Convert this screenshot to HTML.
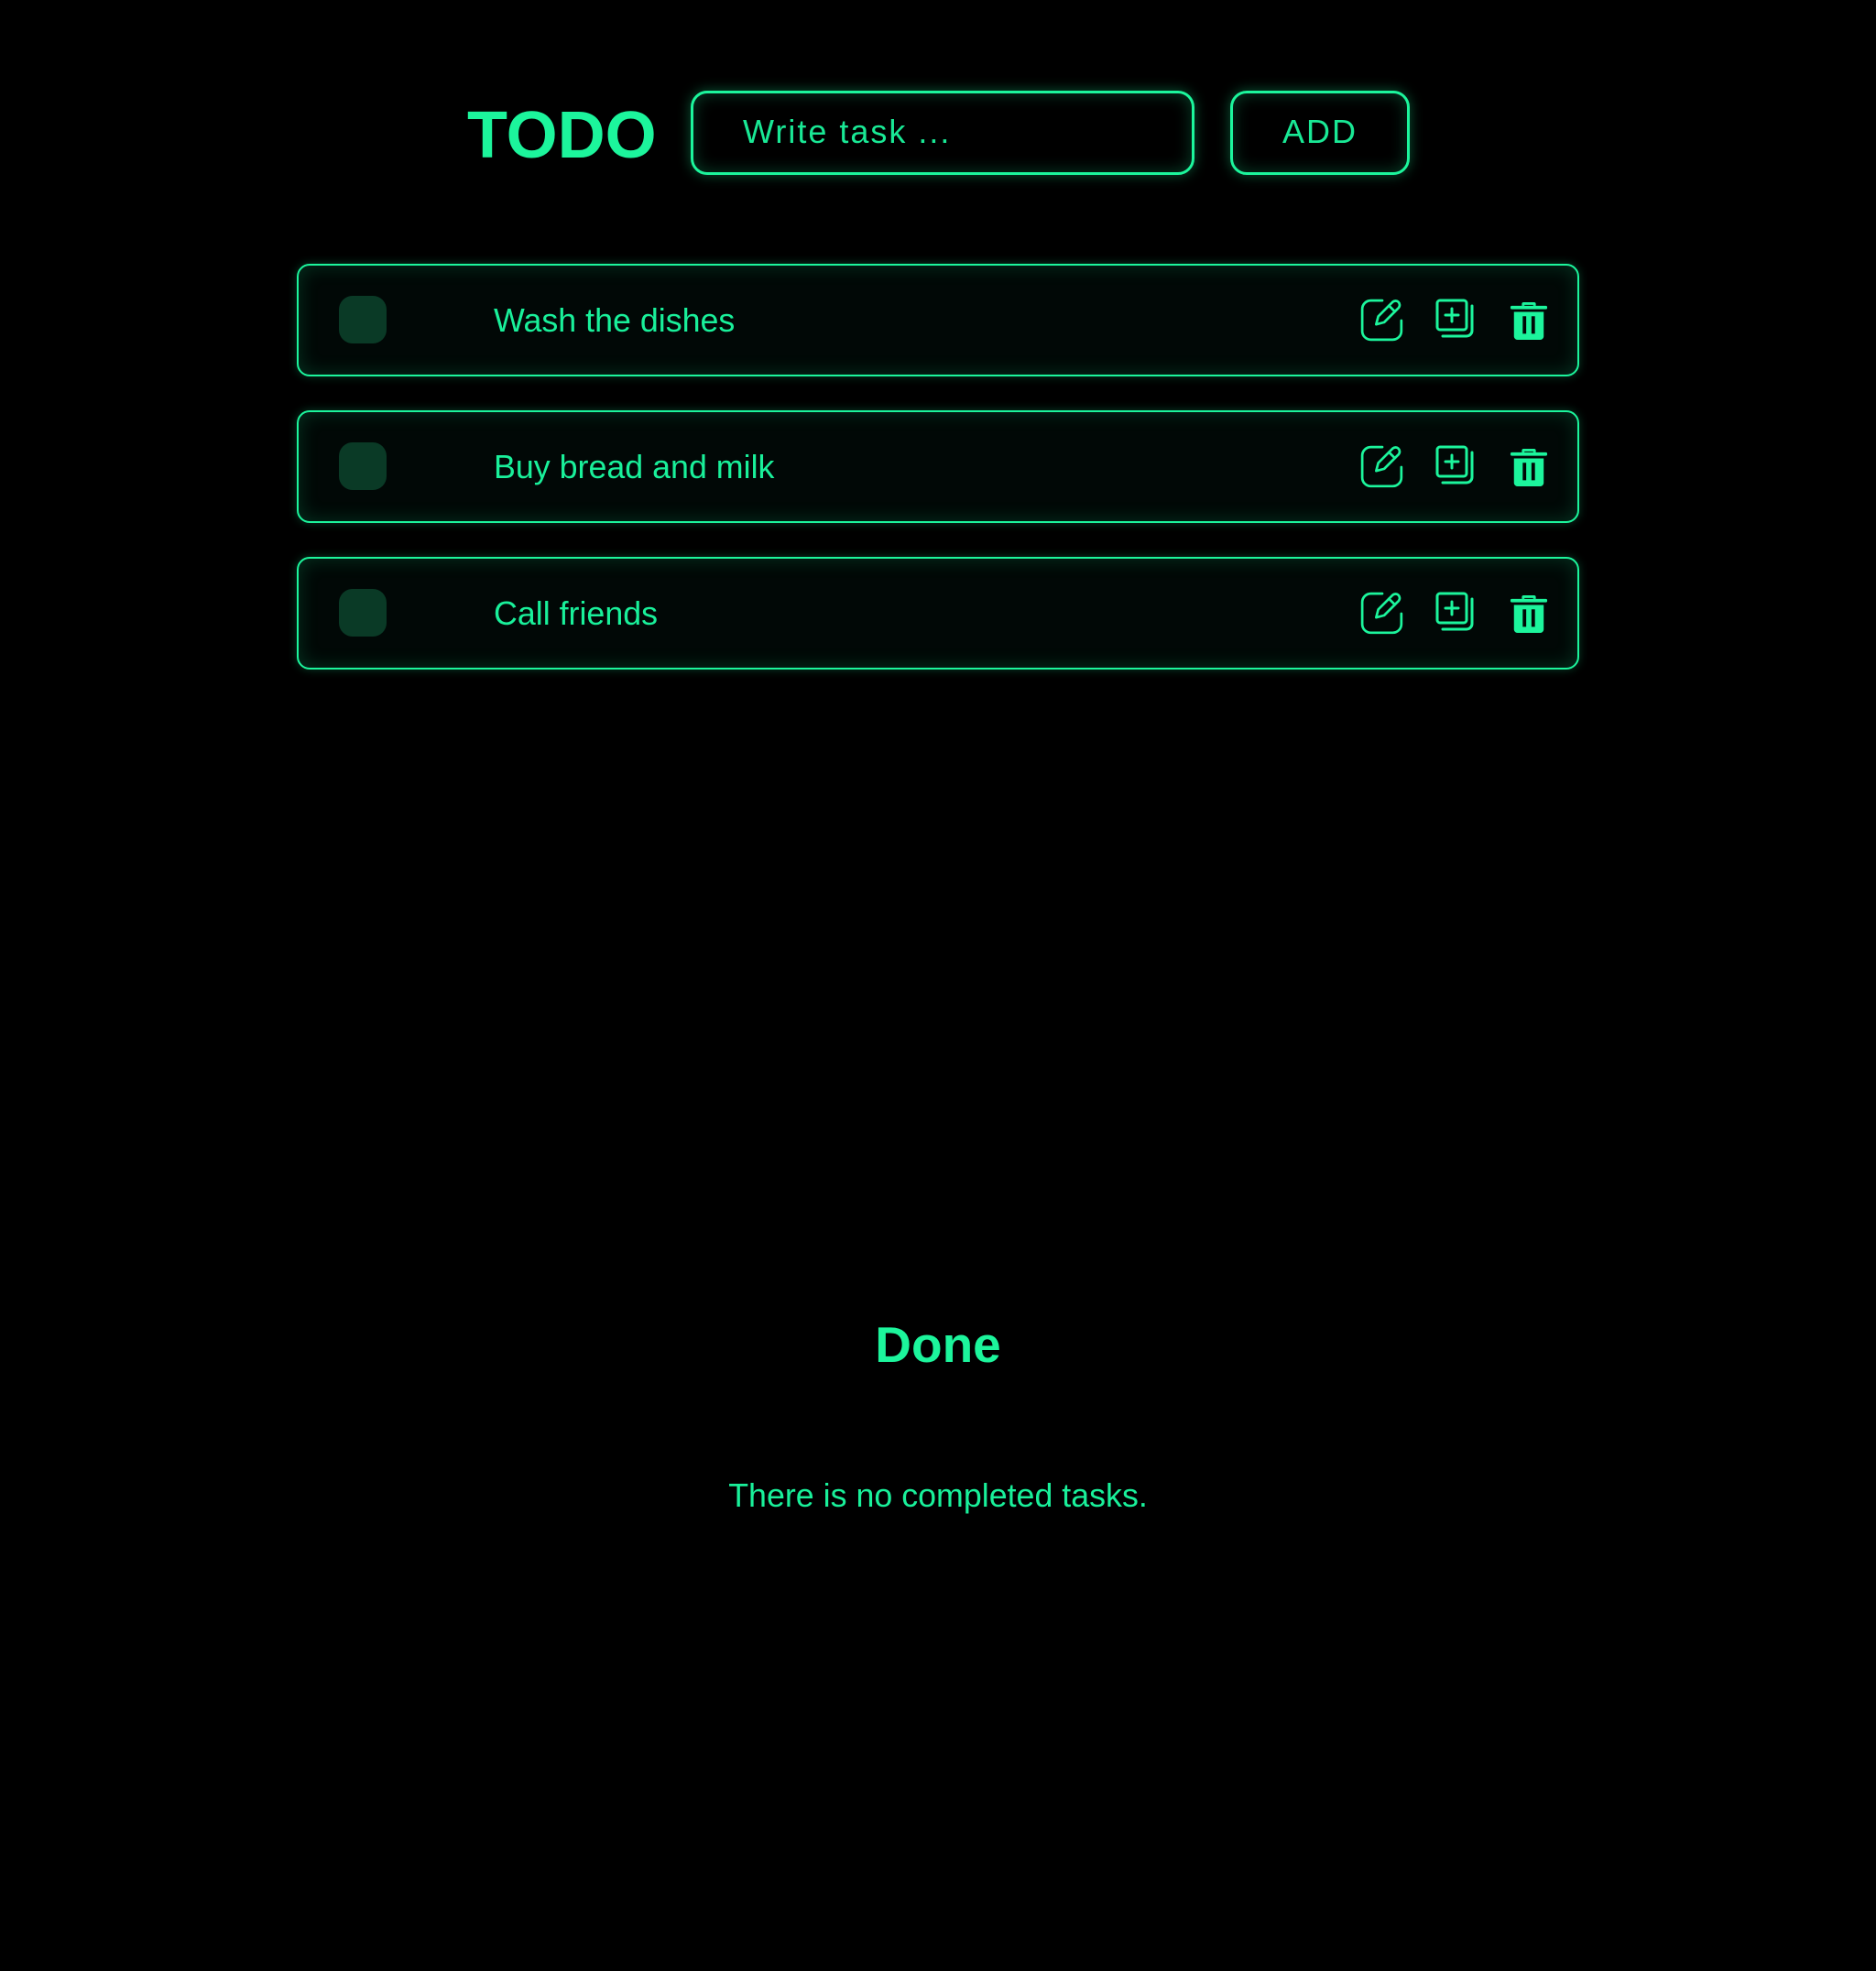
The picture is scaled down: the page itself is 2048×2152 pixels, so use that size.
<!DOCTYPE html>
<html><head><meta charset="utf-8">
<style>
html,body{margin:0;padding:0;background:#000;}
body{width:2048px;height:2152px;position:relative;font-family:"Liberation Sans",sans-serif;color:#19f09a;overflow:hidden;}
.todo{position:absolute;left:510px;top:100px;font-size:72px;font-weight:bold;color:#1cf59c;line-height:96px;}
.input{position:absolute;left:754px;top:99px;width:544px;height:86px;border:3px solid #1cf59c;border-radius:18px;box-shadow:0 0 14px rgba(28,245,156,0.35), inset 0 0 18px rgba(28,245,156,0.25);background:#000;}
.input span{position:absolute;left:54px;top:21px;font-size:36px;letter-spacing:2px;color:#19e895;}
.add{position:absolute;left:1343px;top:99px;width:190px;height:86px;border:3px solid #1cf59c;border-radius:18px;box-shadow:0 0 14px rgba(28,245,156,0.35), inset 0 0 18px rgba(28,245,156,0.25);text-align:center;line-height:84px;font-size:36px;letter-spacing:2px;color:#19e895;}
.card{position:absolute;left:324px;width:1396px;height:119px;border:2px solid #1cf59c;border-radius:14px;box-shadow:0 0 10px rgba(28,245,156,0.25), inset 0 0 22px rgba(28,245,156,0.18);background:#010806;}
.cb{position:absolute;left:44px;top:33px;width:52px;height:52px;border-radius:15px;background:#0a3a26;}
.txt{position:absolute;left:213px;top:39px;font-size:35.8px;line-height:42px;color:#19f09a;}
.ic{position:absolute;top:35px;}
.done{position:absolute;left:0;width:2048px;top:1436px;text-align:center;font-size:55px;font-weight:bold;color:#1cf59c;}
.none{position:absolute;left:0;width:2048px;top:1613px;text-align:center;font-size:35.8px;color:#19f09a;}
</style></head><body>
<div class="todo">TODO</div>
<div class="input"><span>Write task ...</span></div>
<div class="add">ADD</div>

<div class="card" style="top:288px"><div class="cb"></div><div class="txt">Wash the dishes</div>
<svg class="ic" style="left:1158px" width="50" height="50" viewBox="0 0 24 24" fill="none" stroke="#1cf59c" stroke-width="1.3" stroke-linecap="round" stroke-linejoin="round"><path d="M12 1.5H6a4.5 4.5 0 0 0-4.5 4.5v11.5A4.5 4.5 0 0 0 6 22h11.5a4.5 4.5 0 0 0 4.5-4.5V12"/><path d="M17.5 2.2a2.2 2.2 0 0 1 3.1 3.1L13 12.9l-4.2 1.1 1.1-4.2z"/><path d="M15.5 4.2l3.1 3.1"/></svg>
<svg class="ic" style="left:1240px" width="48" height="48" viewBox="0 0 24 24" fill="none" stroke="#1cf59c" stroke-width="1.5" stroke-linecap="round" stroke-linejoin="round"><rect x="1.5" y="1.5" width="16" height="16" rx="1.5"/><path d="M20.5 4.5v13.5a3 3 0 0 1-3 3H4.5"/><path d="M9.5 6v7M6 9.5h7"/></svg>
<svg class="ic" style="left:1322px;top:38px" width="42" height="46" viewBox="0 0 22 24" fill="#1cf59c"><path d="M7 3V2a1 1 0 0 1 1-1h6a1 1 0 0 1 1 1v1h-1.5v-.5h-5V3z"/><rect x="0.5" y="3" width="21" height="2" rx="0.8"/><path d="M2.5 6.5h17v14a2 2 0 0 1-2 2h-13a2 2 0 0 1-2-2z"/><rect x="7.5" y="9" width="2" height="10" fill="#010806"/><rect x="12.5" y="9" width="2" height="10" fill="#010806"/></svg>
</div>

<div class="card" style="top:448px"><div class="cb"></div><div class="txt">Buy bread and milk</div>
<svg class="ic" style="left:1158px" width="50" height="50" viewBox="0 0 24 24" fill="none" stroke="#1cf59c" stroke-width="1.3" stroke-linecap="round" stroke-linejoin="round"><path d="M12 1.5H6a4.5 4.5 0 0 0-4.5 4.5v11.5A4.5 4.5 0 0 0 6 22h11.5a4.5 4.5 0 0 0 4.5-4.5V12"/><path d="M17.5 2.2a2.2 2.2 0 0 1 3.1 3.1L13 12.9l-4.2 1.1 1.1-4.2z"/><path d="M15.5 4.2l3.1 3.1"/></svg>
<svg class="ic" style="left:1240px" width="48" height="48" viewBox="0 0 24 24" fill="none" stroke="#1cf59c" stroke-width="1.5" stroke-linecap="round" stroke-linejoin="round"><rect x="1.5" y="1.5" width="16" height="16" rx="1.5"/><path d="M20.5 4.5v13.5a3 3 0 0 1-3 3H4.5"/><path d="M9.5 6v7M6 9.5h7"/></svg>
<svg class="ic" style="left:1322px;top:38px" width="42" height="46" viewBox="0 0 22 24" fill="#1cf59c"><path d="M7 3V2a1 1 0 0 1 1-1h6a1 1 0 0 1 1 1v1h-1.5v-.5h-5V3z"/><rect x="0.5" y="3" width="21" height="2" rx="0.8"/><path d="M2.5 6.5h17v14a2 2 0 0 1-2 2h-13a2 2 0 0 1-2-2z"/><rect x="7.5" y="9" width="2" height="10" fill="#010806"/><rect x="12.5" y="9" width="2" height="10" fill="#010806"/></svg>
</div>

<div class="card" style="top:608px"><div class="cb"></div><div class="txt">Call friends</div>
<svg class="ic" style="left:1158px" width="50" height="50" viewBox="0 0 24 24" fill="none" stroke="#1cf59c" stroke-width="1.3" stroke-linecap="round" stroke-linejoin="round"><path d="M12 1.5H6a4.5 4.5 0 0 0-4.5 4.5v11.5A4.5 4.5 0 0 0 6 22h11.5a4.5 4.5 0 0 0 4.5-4.5V12"/><path d="M17.5 2.2a2.2 2.2 0 0 1 3.1 3.1L13 12.9l-4.2 1.1 1.1-4.2z"/><path d="M15.5 4.2l3.1 3.1"/></svg>
<svg class="ic" style="left:1240px" width="48" height="48" viewBox="0 0 24 24" fill="none" stroke="#1cf59c" stroke-width="1.5" stroke-linecap="round" stroke-linejoin="round"><rect x="1.5" y="1.5" width="16" height="16" rx="1.5"/><path d="M20.5 4.5v13.5a3 3 0 0 1-3 3H4.5"/><path d="M9.5 6v7M6 9.5h7"/></svg>
<svg class="ic" style="left:1322px;top:38px" width="42" height="46" viewBox="0 0 22 24" fill="#1cf59c"><path d="M7 3V2a1 1 0 0 1 1-1h6a1 1 0 0 1 1 1v1h-1.5v-.5h-5V3z"/><rect x="0.5" y="3" width="21" height="2" rx="0.8"/><path d="M2.5 6.5h17v14a2 2 0 0 1-2 2h-13a2 2 0 0 1-2-2z"/><rect x="7.5" y="9" width="2" height="10" fill="#010806"/><rect x="12.5" y="9" width="2" height="10" fill="#010806"/></svg>
</div>

<div class="done">Done</div>
<div class="none">There is no completed tasks.</div>
</body></html>
